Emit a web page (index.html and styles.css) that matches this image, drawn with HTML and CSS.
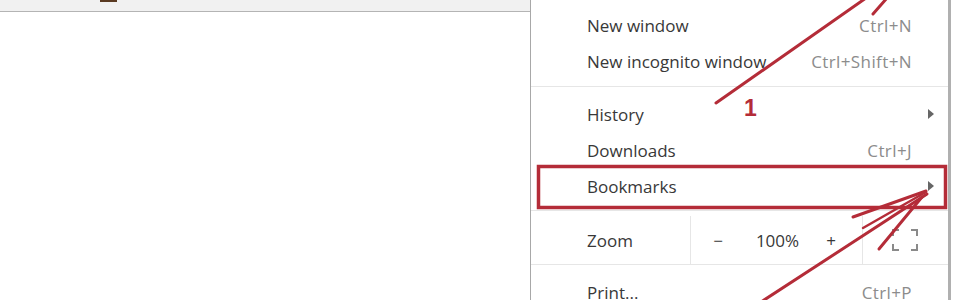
FILE: index.html
```html
<!DOCTYPE html>
<html lang="en">
<head>
  <meta charset="UTF-8">
  <title>Chrome menu - Bookmarks</title>
  <link rel="stylesheet" href="styles.css">
</head>
<body>
  <div class="page">
    <div class="toolbar">
      <span class="tb-mark"></span>
    </div>

    <div class="menu">
      <div class="menu-item cut">
        <span class="label">New tab</span>
        <span class="key">Ctrl+T</span>
      </div>
      <div class="menu-item">
        <span class="label">New window</span>
        <span class="key">Ctrl+N</span>
      </div>
      <div class="menu-item">
        <span class="label">New incognito window</span>
        <span class="key">Ctrl+Shift+N</span>
      </div>
      <div class="sep sep-top"></div>
      <div class="menu-item">
        <span class="label">History</span>
        <span class="sub"></span>
      </div>
      <div class="menu-item">
        <span class="label">Downloads</span>
        <span class="key">Ctrl+J</span>
      </div>
      <div class="menu-item">
        <span class="label">Bookmarks</span>
        <span class="sub"></span>
      </div>
      <div class="sep sep-mid"></div>
      <div class="zoom-row">
        <span class="label zoom-label">Zoom</span>
        <div class="zoom-ctrl">
          <span class="zbtn">&minus;</span>
          <span class="zval">100%</span>
          <span class="zbtn">+</span>
        </div>
        <div class="zoom-full">
          <svg width="26" height="22" viewBox="0 0 26 22">
            <path d="M1 7V1h6M19 1h6v6M25 15v6h-6M7 21H1v-6" fill="none" stroke="#8a8a8a" stroke-width="2"/>
          </svg>
        </div>
      </div>
      <div class="sep sep-bottom"></div>
      <div class="menu-item">
        <span class="label">Print...</span>
        <span class="key">Ctrl+P</span>
      </div>
    </div>

    <svg class="marks" width="960" height="300" viewBox="0 0 960 300">
      <g fill="none" stroke="#b42c38" stroke-linecap="round">
        <rect x="538.5" y="166.5" width="407" height="41" stroke-width="3.5"/>
        <path d="M716 103L866 -2" stroke-width="3"/>
        <path d="M873 14L887 -2" stroke-width="3"/>
        <path d="M853 217L926 191" stroke-width="3"/>
        <path d="M863 228L926 192" stroke-width="2.5"/>
        <path d="M879 249L922 197" stroke-width="3"/>
        <path d="M758 304L927 194" stroke-width="3"/>
      </g>
      <text x="744" y="116" class="num">1</text>
    </svg>
  </div>
</body>
</html>
```

FILE: styles.css
```css
body {
  margin: 0;
  background-color: #ffffff;
  font-family: "Open Sans", "Noto Sans", Arial, sans-serif;
}

.page {
  position: relative;
  width: 960px;
  height: 300px;
  overflow: hidden;
  background-color: #ffffff;
}

.toolbar {
  width: 531px;
  height: 11px;
  background-color: #f1f1f1;
  border-bottom: 1px solid #b4b4b4;
}

.tb-mark {
  display: block;
  margin-left: 100px;
  width: 17px;
  height: 2px;
  background-color: #5a3a22;
}

/* dropdown menu, opened over the page */
.menu {
  position: absolute;
  left: 530px;
  top: 0;
  width: 417px;
  height: 300px;
  background-color: #ffffff;
  border-left: 1px solid #a8a8a8;
  border-right: 3px solid #b0b0b0;
  color: #383838;
  font-size: 17px;
}

.menu-item {
  display: flex;
  align-items: center;
  height: 36px;
  padding: 0 36px 0 56px;
}

.menu-item.cut {
  margin-top: -29px;
}

.label {
  flex: 1;
}

.key {
  color: #8c8c8c;
  letter-spacing: 0.4px;
}

.sub {
  width: 0;
  height: 0;
  margin-right: -22px;
  border-top: 5px solid transparent;
  border-bottom: 5px solid transparent;
  border-left: 6px solid #666666;
}

.sep {
  height: 1px;
  background-color: #e6e6e6;
}

.sep-top {
  margin: 7px 0 9px;
}

.sep-mid {
  margin: 6px 0 5px;
}

.sep-bottom {
  margin: 0 0 9px;
}

.zoom-row {
  display: flex;
  height: 48px;
}

.zoom-label {
  flex: none;
  width: 103px;
  padding-left: 56px;
  display: flex;
  align-items: center;
  border-right: 1px solid #e6e6e6;
}

.zoom-ctrl {
  width: 172px;
  display: flex;
  align-items: center;
  justify-content: space-between;
  padding: 0 26px 0 22px;
  box-sizing: border-box;
  border-right: 1px solid #e6e6e6;
}

.zbtn {
  width: 10px;
  text-align: center;
}

.zval {
  margin-left: 6px;
}

.zoom-full {
  flex: 1;
  display: flex;
  align-items: center;
  padding-left: 29px;
}

.marks {
  position: absolute;
  left: 0;
  top: 0;
}

.num {
  font-family: "Liberation Sans", Arial, sans-serif;
  font-size: 23px;
  font-weight: bold;
  fill: #b42c38;
}
```
